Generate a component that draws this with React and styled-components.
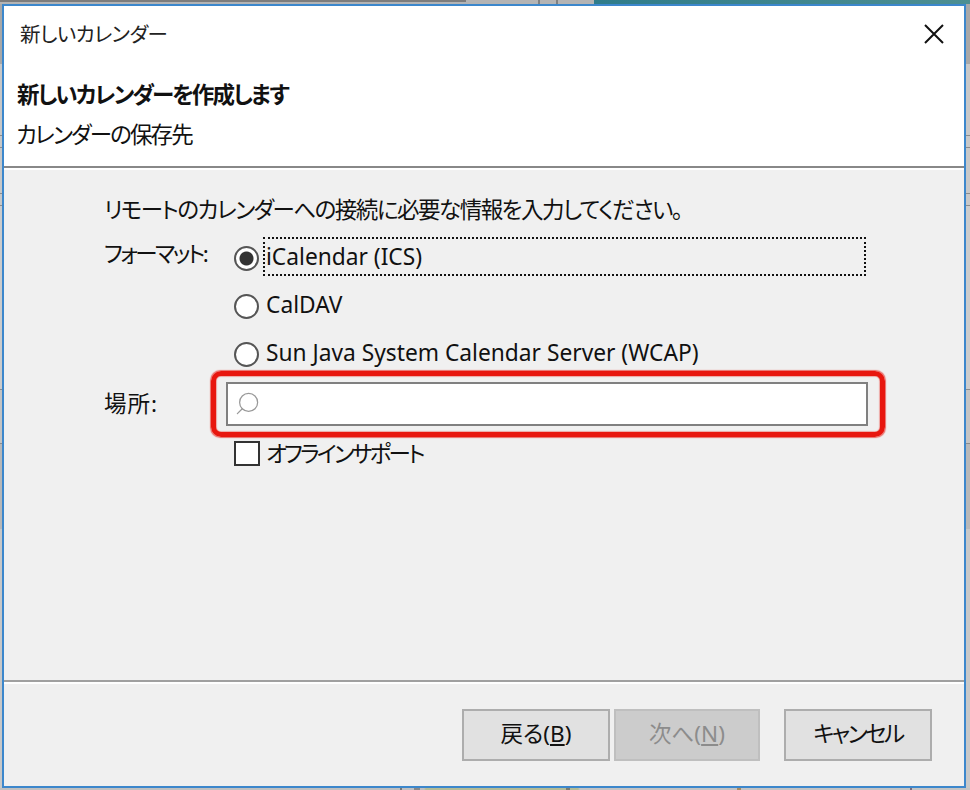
import React from "react";
import styled, { createGlobalStyle } from "styled-components";
import { Search } from "lucide-react";

const GlobalStyle = createGlobalStyle`
  html, body {
    margin: 0;
    padding: 0;
    height: 100%;
    overflow: hidden;
  }
  body {
    font-family: "Noto Sans", "Noto Sans CJK JP", sans-serif;
    font-feature-settings: "palt";
    color: #111;
  }
`;

const App = () => {
  return (
    <Desktop>
      <GlobalStyle />
      <Dialog>
        <TitleBar>
          <TitleText>新しいカレンダー</TitleText>
          <CloseIcon viewBox="0 0 20 20">
            <path d="M1 1 L19 19 M19 1 L1 19" />
          </CloseIcon>
        </TitleBar>

        <WizardHeader>
          <HeaderTitle>新しいカレンダーを作成します</HeaderTitle>
          <HeaderSub>カレンダーの保存先</HeaderSub>
        </WizardHeader>

        <Body>
          <Intro>リモートのカレンダーへの接続に必要な情報を入力してください。</Intro>

          <FormatRow>
            <FieldLabel $spacing={-2.5}>フォーマット:</FieldLabel>
            <RadioGroup>
              <RadioRow>
                <Radio type="radio" name="format" defaultChecked />
                <RadioLabel $focused>iCalendar (ICS)</RadioLabel>
              </RadioRow>
              <RadioRow>
                <Radio type="radio" name="format" />
                <RadioLabel>CalDAV</RadioLabel>
              </RadioRow>
              <RadioRow>
                <Radio type="radio" name="format" />
                <RadioLabel>Sun Java System Calendar Server (WCAP)</RadioLabel>
              </RadioRow>
            </RadioGroup>
          </FormatRow>

          <LocationRow>
            <FieldLabel $spacing={1}>場所:</FieldLabel>
            <SearchBox>
              <SearchIcon size={27} strokeWidth={1.1} />
              <RedHighlight />
            </SearchBox>
          </LocationRow>

          <OfflineRow>
            <Checkbox type="checkbox" />
            <OfflineText>オフラインサポート</OfflineText>
          </OfflineRow>
        </Body>

        <Footer>
          <WizardButton $width={148}>
            戻る(<u>B</u>)
          </WizardButton>
          <WizardButton $width={146} disabled>
            次へ(<u>N</u>)
          </WizardButton>
          <CancelButton $width={148}>キャンセル</CancelButton>
        </Footer>
      </Dialog>
    </Desktop>
  );
};

// what shows around the dialog: other windows behind it
const Desktop = styled.div`
  width: 970px;
  height: 790px;
  box-sizing: border-box;
  padding: 4px 4px 2px 2px;
  background:
    linear-gradient(90deg, #7c7c7c 446px 466px, transparent 466px) top / 100% 2px no-repeat,
    linear-gradient(90deg, #b4b4b4 0 538px, #808080 538px 540px, #b4b4b4 540px 556px, #808080 556px 558px, #b4b4b4 558px 594px, #2f7c8a 594px, #4d8f92 970px) top / 100% 4px no-repeat,
    linear-gradient(90deg, #c0c0c0 0 400px, #777 400px 402px, #c0c0c0 402px 414px, #888 414px 420px, #c0c0c0 420px 424px, #b4bc96 426px 566px, #7a7a70 566px 570px, #b4bc96 570px 578px, #c4c4c4 580px 737px, #a88a60 737px 741px, #c4c4c4 741px 910px, #7a6a7a 910px 912px, #c4c4c4 912px) bottom / 100% 2px no-repeat,
    linear-gradient(180deg, #a8a8a8 0 64px, #c8c8c8 64px 135px, #8c8c8c 135px 136px, #c8c8c8 136px 147px, #8c8c8c 147px 148px, #c8c8c8 148px 193px, #8c8c8c 193px 194px, #c8c8c8 194px 205px, #8c8c8c 205px 206px, #cccccc 206px 389px, #8c8c8c 389px 390px, #c4c4c4 390px 443px, #8c8c8c 443px 444px, #b8b8b8 444px 529px, #c8c8c8 529px);
`;

const Dialog = styled.div`
  height: 100%;
  box-sizing: border-box;
  display: flex;
  flex-direction: column;
  background: #f0f0f0;
  border: 2px solid #3c87cc;
`;

const TitleBar = styled.div`
  height: 56px;
  flex-shrink: 0;
  display: flex;
  align-items: center;
  justify-content: space-between;
  padding: 0 20px 0 16px;
  background: #fff;
`;

const TitleText = styled.div`
  font-size: 20.5px;
  letter-spacing: -0.5px;
  line-height: 56px;
  color: #222;
`;

const CloseIcon = styled.svg`
  width: 20px;
  height: 20px;
  fill: none;
  stroke: #111;
  stroke-width: 2;
`;

const WizardHeader = styled.div`
  height: 104px;
  flex-shrink: 0;
  padding-left: 13px;
  background: #fff;
  border-bottom: 2px solid #888;
  box-shadow: 0 2px 0 #fff;
`;

const HeaderTitle = styled.div`
  font-size: 22.5px;
  font-weight: 700;
  letter-spacing: -1.9px;
  line-height: 40px;
  margin-top: 13px;
`;

const HeaderSub = styled.div`
  font-size: 22.5px;
  letter-spacing: -1.85px;
  line-height: 40px;
  margin-left: -1px;
`;

const Body = styled.div`
  flex: 1;
  padding: 26px 0 0 100px;
  font-size: 22.5px;
`;

const Intro = styled.div`
  line-height: 32px;
  letter-spacing: -1.5px;
`;

const FormatRow = styled.div`
  display: grid;
  grid-template-columns: 130px 1fr;
  margin-top: 11px;
`;

const FieldLabel = styled.div`
  line-height: 34px;
  letter-spacing: ${(props) => props.$spacing}px;
`;

const RadioGroup = styled.div`
  display: flex;
  flex-direction: column;
  gap: 9px;
`;

const RadioRow = styled.div`
  display: flex;
  align-items: center;
  gap: 4px;
`;

const Radio = styled.input`
  appearance: none;
  width: 25px;
  height: 25px;
  margin: 4px 0 0;
  flex-shrink: 0;
  box-sizing: border-box;
  border: 2px solid #555;
  border-radius: 50%;
  background: #fff;

  &:checked {
    background: radial-gradient(circle, #333 0 6.5px, #fff 7.5px);
  }
`;

const RadioLabel = styled.label`
  width: 603px;
  height: 39px;
  box-sizing: border-box;
  padding-left: 1px;
  font-size: 22.75px;
  line-height: 35px;
  border: 2px dotted ${(props) => (props.$focused ? "#111" : "transparent")};
`;

const LocationRow = styled.div`
  display: grid;
  grid-template-columns: 122px 642px;
  align-items: center;
  margin-top: 10px;
`;

const SearchBox = styled.div`
  position: relative;
  height: 44px;
  box-sizing: border-box;
  display: flex;
  align-items: center;
  padding-left: 6px;
  background: #fff;
  border: 2px solid #808080;
`;

const SearchIcon = styled(Search)`
  color: #999;
  margin-top: -2px;
  transform: scaleX(-1);
`;

const RedHighlight = styled.div`
  position: absolute;
  inset: -13px -19px -13px -17px;
  border: 5px solid #e8170f;
  border-radius: 10px;
  box-shadow: 0 0 1px 0.5px rgba(232, 23, 15, 0.6), inset 0 0 1px 0.5px rgba(232, 23, 15, 0.6);
`;

const OfflineRow = styled.div`
  display: flex;
  align-items: center;
  gap: 6px;
  margin: 15px 0 0 130px;
  line-height: 25px;
`;

const OfflineText = styled.span`
  letter-spacing: -2.7px;
`;

const Checkbox = styled.input`
  appearance: none;
  width: 26px;
  height: 25px;
  margin: 0;
  box-sizing: border-box;
  border: 2px solid #333;
  background: #fff;
`;

const Footer = styled.div`
  height: 106px;
  flex-shrink: 0;
  display: flex;
  align-items: flex-start;
  padding: 27px 32px 0 458px;
  box-sizing: border-box;
  border-top: 2px solid #a0a0a0;
  box-shadow: inset 0 2px 0 #fff;
`;

const WizardButton = styled.button`
  width: ${(props) => props.$width}px;
  height: 52px;
  margin-right: 4px;
  padding: 0 0 6px;
  box-sizing: border-box;
  font: inherit;
  font-size: 22.5px;
  color: #111;
  background: #e1e1e1;
  border: 2px solid #adadad;

  &:disabled {
    color: #8c8c8c;
    background: #ccc;
    border-color: #bfbfbf;
  }
`;

const CancelButton = styled(WizardButton)`
  margin: 0 0 0 20px;
  letter-spacing: -2.5px;
`;

export default App;
